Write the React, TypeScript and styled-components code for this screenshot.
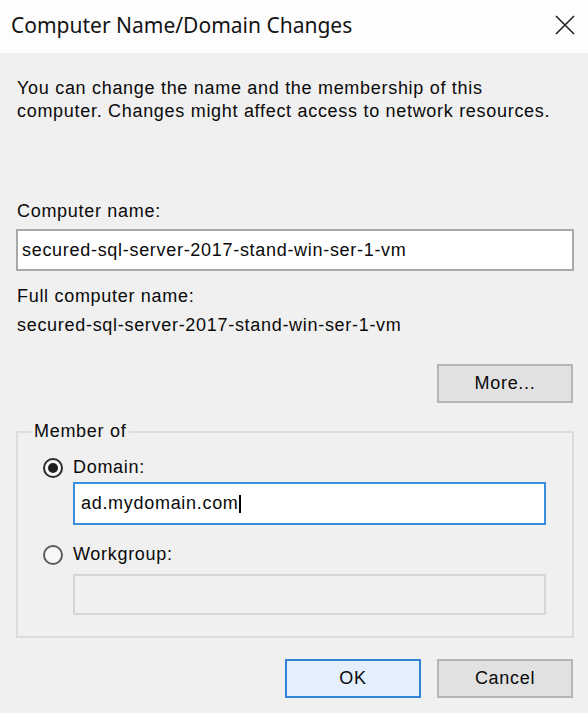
import React from 'react';
import styled, { createGlobalStyle } from 'styled-components';

const Global = createGlobalStyle`
  html, body { margin: 0; padding: 0; background: #f0f0f0; }
  body { font-family: "Liberation Sans", Arial, sans-serif; }
  * { box-sizing: border-box; }
`;

const Dialog = styled.div`
  width: 588px;
  height: 713px;
  background: #f0f0f0;
  display: flex;
  flex-direction: column;
  overflow: hidden;
`;

const TitleBar = styled.div`
  height: 53px;
  background: #fdfdfd;
  display: flex;
  align-items: center;
  justify-content: space-between;
  padding: 0 12px 3px 11px;
  flex-shrink: 0;
`;

const Title = styled.h1`
  margin: 0;
  font-family: "Noto Sans", "Open Sans", sans-serif;
  font-weight: 400;
  font-size: 21px;
  color: #141414;
`;

const CloseButton = styled.button`
  width: 22px;
  height: 22px;
  padding: 0;
  border: 0;
  background: transparent;
  display: flex;
  align-items: center;
  justify-content: center;
`;

const Body = styled.div`
  padding: 24px 14px 0 16px;
  display: flex;
  flex-direction: column;
  font-size: 18px;
  letter-spacing: 0.7px;
  line-height: 23px;
  color: #0a0a0a;
`;

const Text = styled.p<{ $mt?: number }>`
  margin: ${p => p.$mt ?? 0}px 0 0 1px;
`;

const TextBox = styled.div<{ $variant?: 'normal' | 'focused' | 'disabled'; $mt?: number; $h?: number; $pl?: number }>`
  margin-top: ${p => p.$mt ?? 0}px;
  height: ${p => p.$h ?? 42}px;
  display: flex;
  align-items: center;
  padding-left: ${p => p.$pl ?? 4}px;
  background: ${p => (p.$variant === 'disabled' ? '#f0f0f0' : '#ffffff')};
  border: 2px solid
    ${p => (p.$variant === 'focused' ? '#3a8ee0' : p.$variant === 'disabled' ? '#d6d6d6' : '#a9a9a9')};
  white-space: nowrap;
`;

const Caret = styled.span`
  display: inline-block;
  width: 2px;
  height: 18px;
  background: #000;
  margin-left: 0px;
`;

const ButtonRow = styled.div<{ $mt: number }>`
  margin-top: ${p => p.$mt}px;
  display: flex;
  justify-content: flex-end;
  gap: 16px;
  padding-right: 1px;
`;

const Button = styled.button<{ $primary?: boolean }>`
  width: 136px;
  height: 39px;
  font-family: "Liberation Sans", Arial, sans-serif;
  font-size: 18px;
  letter-spacing: 0.7px;
  color: #0a0a0a;
  background: ${p => (p.$primary ? '#e3f0fb' : '#e1e1e1')};
  border: 2px solid ${p => (p.$primary ? '#3183d3' : '#b5b5b5')};
  padding: 0;
`;

const Group = styled.fieldset`
  margin: 17px 0 0 0;
  border: 2px solid #dcdcdc;
  padding: 0 26px 21px 13px;
`;

const Legend = styled.legend`
  padding: 0 3px;
  font-size: 18px;
  line-height: 23px;
`;

const GroupInner = styled.div`
  padding-left: 12px;
  display: flex;
  flex-direction: column;
`;

const RadioRow = styled.label<{ $mt: number }>`
  margin-top: ${p => p.$mt}px;
  display: flex;
  align-items: center;
  gap: 10px;
  height: 23px;
`;

const RadioCircle = styled.span<{ $checked?: boolean }>`
  width: 20px;
  height: 20px;
  border-radius: 50%;
  border: 2px solid ${p => (p.$checked ? '#2b2b2b' : '#5c5c5c')};
  background: #f7f7f7;
  display: flex;
  align-items: center;
  justify-content: center;
  flex-shrink: 0;
  &::after {
    content: '';
    display: ${p => (p.$checked ? 'block' : 'none')};
    width: 10px;
    height: 10px;
    border-radius: 50%;
    background: #1e1e1e;
  }
`;

const IndentedBox = styled(TextBox)`
  margin-left: 30px;
`;

export default function App() {
  return (
    <Dialog>
      <Global />
      <TitleBar>
        <Title>Computer Name/Domain Changes</Title>
        <CloseButton aria-label="Close">
          <svg width="20" height="20" viewBox="0 0 20 20">
            <path d="M1 1 L19 19 M19 1 L1 19" stroke="#222" strokeWidth="1.6" fill="none" />
          </svg>
        </CloseButton>
      </TitleBar>
      <Body>
        <Text>
          You can change the name and the membership of this
          <br />
          computer. Changes might affect access to network resources.
        </Text>
        <Text $mt={77}>Computer name:</Text>
        <TextBox $mt={6}>secured-sql-server-2017-stand-win-ser-1-vm</TextBox>
        <Text $mt={14}>Full computer name:</Text>
        <Text $mt={6}>secured-sql-server-2017-stand-win-ser-1-vm</Text>
        <ButtonRow $mt={27}>
          <Button>More...</Button>
        </ButtonRow>
        <Group>
          <Legend>Member of</Legend>
          <GroupInner>
            <RadioRow $mt={13}>
              <RadioCircle $checked />
              Domain:
            </RadioRow>
            <IndentedBox $variant="focused" $mt={3} $h={43} $pl={6}>
              ad.mydomain.com
              <Caret />
            </IndentedBox>
            <RadioRow $mt={18}>
              <RadioCircle />
              Workgroup:
            </RadioRow>
            <IndentedBox $variant="disabled" $mt={8} $h={41} />
          </GroupInner>
        </Group>
        <ButtonRow $mt={21}>
          <Button $primary>OK</Button>
          <Button>Cancel</Button>
        </ButtonRow>
      </Body>
    </Dialog>
  );
}
